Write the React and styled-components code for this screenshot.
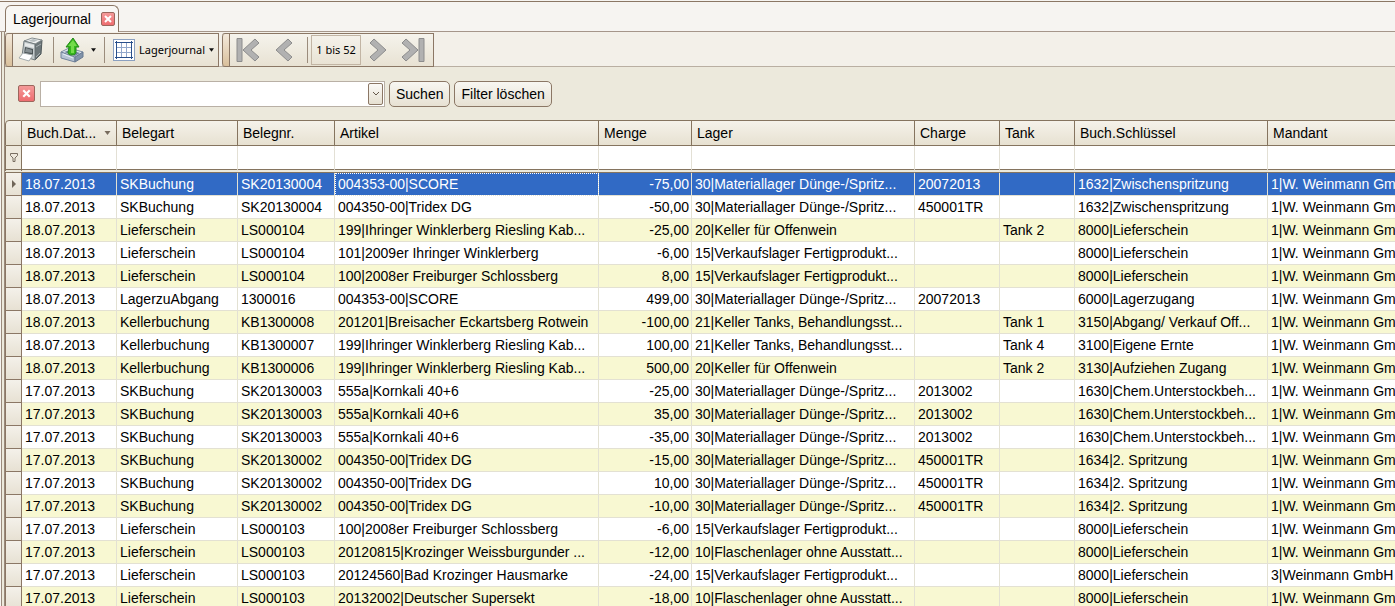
import React from "react";
import styled, { createGlobalStyle } from "styled-components";

const columns = [
  { title: "Buch.Dat...", width: 95, sorted: true },
  { title: "Belegart", width: 121 },
  { title: "Belegnr.", width: 97 },
  { title: "Artikel", width: 264 },
  { title: "Menge", width: 93, numeric: true },
  { title: "Lager", width: 223 },
  { title: "Charge", width: 85 },
  { title: "Tank", width: 75 },
  { title: "Buch.Schlüssel", width: 193 },
  { title: "Mandant" },
];

const weinmann = "1|W. Weinmann GmbH";
const material = "30|Materiallager Dünge-/Spritz...";
const verkauf = "15|Verkaufslager Fertigprodukt...";
const tanks = "21|Keller Tanks, Behandlungsst...";
const riesling = "199|Ihringer Winklerberg Riesling Kab...";

const rows = [
  ["18.07.2013", "SKBuchung", "SK20130004", "004353-00|SCORE", "-75,00", material, "20072013", "", "1632|Zwischenspritzung", weinmann],
  ["18.07.2013", "SKBuchung", "SK20130004", "004350-00|Tridex DG", "-50,00", material, "450001TR", "", "1632|Zwischenspritzung", weinmann],
  ["18.07.2013", "Lieferschein", "LS000104", riesling, "-25,00", "20|Keller für Offenwein", "", "Tank 2", "8000|Lieferschein", weinmann],
  ["18.07.2013", "Lieferschein", "LS000104", "101|2009er Ihringer Winklerberg", "-6,00", verkauf, "", "", "8000|Lieferschein", weinmann],
  ["18.07.2013", "Lieferschein", "LS000104", "100|2008er Freiburger Schlossberg", "8,00", verkauf, "", "", "8000|Lieferschein", weinmann],
  ["18.07.2013", "LagerzuAbgang", "1300016", "004353-00|SCORE", "499,00", material, "20072013", "", "6000|Lagerzugang", weinmann],
  ["18.07.2013", "Kellerbuchung", "KB1300008", "201201|Breisacher Eckartsberg Rotwein", "-100,00", tanks, "", "Tank 1", "3150|Abgang/ Verkauf Off...", weinmann],
  ["18.07.2013", "Kellerbuchung", "KB1300007", riesling, "100,00", tanks, "", "Tank 4", "3100|Eigene Ernte", weinmann],
  ["18.07.2013", "Kellerbuchung", "KB1300006", riesling, "500,00", "20|Keller für Offenwein", "", "Tank 2", "3130|Aufziehen Zugang", weinmann],
  ["17.07.2013", "SKBuchung", "SK20130003", "555a|Kornkali 40+6", "-25,00", material, "2013002", "", "1630|Chem.Unterstockbeh...", weinmann],
  ["17.07.2013", "SKBuchung", "SK20130003", "555a|Kornkali 40+6", "35,00", material, "2013002", "", "1630|Chem.Unterstockbeh...", weinmann],
  ["17.07.2013", "SKBuchung", "SK20130003", "555a|Kornkali 40+6", "-35,00", material, "2013002", "", "1630|Chem.Unterstockbeh...", weinmann],
  ["17.07.2013", "SKBuchung", "SK20130002", "004350-00|Tridex DG", "-15,00", material, "450001TR", "", "1634|2. Spritzung", weinmann],
  ["17.07.2013", "SKBuchung", "SK20130002", "004350-00|Tridex DG", "10,00", material, "450001TR", "", "1634|2. Spritzung", weinmann],
  ["17.07.2013", "SKBuchung", "SK20130002", "004350-00|Tridex DG", "-10,00", material, "450001TR", "", "1634|2. Spritzung", weinmann],
  ["17.07.2013", "Lieferschein", "LS000103", "100|2008er Freiburger Schlossberg", "-6,00", verkauf, "", "", "8000|Lieferschein", weinmann],
  ["17.07.2013", "Lieferschein", "LS000103", "20120815|Krozinger Weissburgunder ...", "-12,00", "10|Flaschenlager ohne Ausstatt...", "", "", "8000|Lieferschein", weinmann],
  ["17.07.2013", "Lieferschein", "LS000103", "20124560|Bad Krozinger Hausmarke", "-24,00", verkauf, "", "", "8000|Lieferschein", "3|Weinmann GmbH"],
  ["17.07.2013", "Lieferschein", "LS000103", "20132002|Deutscher Supersekt", "-18,00", "10|Flaschenlager ohne Ausstatt...", "", "", "8000|Lieferschein", weinmann],
];

const PrinterIcon = () => (
  <svg width="26" height="26" viewBox="0 0 26 26" aria-hidden="true">
    <path d="m17 7 7-4-1 14-6 6z" fill="#6d777a" stroke="#50595c" strokeLinejoin="round" />
    <path d="m6 4 8-3 10 2-7 4z" fill="#eef0f0" stroke="#858d8f" strokeLinejoin="round" />
    <path d="m10 4 5-2 5 1-4 2z" fill="#b9c0c2" />
    <path d="m6 4 11 3v16L4 19z" fill="#c3cacc" stroke="#737c7f" strokeLinejoin="round" />
    <path d="m7 6 9 2v3L7 9z" fill="#e7eaea" />
    <path d="m7 10 8 2v7l-9-2z" fill="#4b5356" />
    <path d="m8 11 6 2v3l-7-1z" fill="#879093" />
    <path d="m5 16 10 2-4 6-10-3z" fill="#fff" stroke="#a3abad" strokeLinejoin="round" />
    <path d="m18 10 5-3M18 20l4-4" stroke="#a5adaf" />
  </svg>
);

const ExportIcon = () => (
  <svg width="24" height="26" viewBox="0 0 24 26" aria-hidden="true">
    <path d="m1 15 8-4 14 4-8 6z" fill="#dfe6ee" stroke="#7b8ca2" strokeLinejoin="round" />
    <path d="m4 15 6-2 10 3-5 3z" fill="#71849c" />
    <path d="m1 15 14 5v5L1 21z" fill="#b7c4d4" stroke="#72839b" strokeLinejoin="round" />
    <path d="m15 20 8-5v5l-8 5z" fill="#8193aa" stroke="#677991" strokeLinejoin="round" />
    <path d="m3 17 10 4" stroke="#eaf0f7" />
    <path d="M9 10H6l7-9 6 9h-3v5c0 2-2 3-4 3s-4-1-4-2z" fill="#35b71c" stroke="#238918" strokeLinejoin="round" />
    <path d="m8 9 5-6 4 6h-3v7h-3V9z" fill="#73dc4a" />
  </svg>
);

const GridIcon = () => (
  <svg width="22" height="22" viewBox="0 0 22 22" aria-hidden="true" shapeRendering="crispEdges">
    <rect x="0.5" y="0.5" width="21" height="21" fill="#fff" stroke="#8ba0c0" />
    <path d="M8.5 3v16M13.5 3v16M3 8.5h16M3 13.5h16" stroke="#91a7cb" />
    <path d="M3.5 2v18M18.5 2v18M2 3.5h18M2 18.5h18" stroke="#294f8b" />
  </svg>
);

const NavIcon = ({ forward, end }) => (
  <svg width={end ? 24 : 17} height="24" viewBox={end ? "0 0 24 24" : "7 0 17 24"} aria-hidden="true">
    <g transform={forward ? (end ? "matrix(-1 0 0 1 24 0)" : "matrix(-1 0 0 1 31 0)") : undefined} fill="#b1b1b1" stroke="#8c8c8c">
      {end && <path d="M1 .5h5v23H1z" />}
      <path d="m19 1 4 4-8 7 8 7-4 4L7 12z" />
    </g>
  </svg>
);

const CloseIcon = ({ size }) => (
  <svg width={size} height={size} viewBox="0 0 12 12" aria-hidden="true">
    <path d="m3 3 6 6M9 3 3 9" stroke="#fff" strokeWidth="2" />
  </svg>
);

const Arrow = ({ color = "#111", size = 5 }) => (
  <svg width={size} height="4" viewBox="0 0 6 4" aria-hidden="true">
    <path d="M0 0h6L3 4z" fill={color} />
  </svg>
);

const App = () => {
  return (
    <>
      <GlobalStyle />
      <Page>
        <TabStrip role="tablist">
          <Tab role="tab" aria-selected="true" tabIndex={0}>
            Lagerjournal
            <CloseButton $size={14} aria-label="Tab schließen">
              <CloseIcon size={12} />
            </CloseButton>
          </Tab>
        </TabStrip>
        <Panel>
          <ToolbarRow>
            <Toolbar>
              <Grip />
              <ToolButton $width={35} aria-label="Drucken">
                <PrinterIcon />
              </ToolButton>
              <Separator />
              <ToolButton $width={42} aria-label="Exportieren">
                <ExportIcon />
                <Arrow />
              </ToolButton>
              <Separator />
              <LayoutButton>
                <GridIcon />
                <span>Lagerjournal</span>
                <Arrow />
              </LayoutButton>
            </Toolbar>
            <Toolbar>
              <Grip />
              <ToolButton $width={36} aria-label="Erster Datensatz">
                <NavIcon end />
              </ToolButton>
              <ToolButton $width={36} aria-label="Zurück">
                <NavIcon />
              </ToolButton>
              <Separator />
              <PageBox>1 bis 52</PageBox>
              <ToolButton $width={32} aria-label="Weiter">
                <NavIcon forward />
              </ToolButton>
              <ToolButton $width={40} aria-label="Letzter Datensatz">
                <NavIcon forward end />
              </ToolButton>
            </Toolbar>
          </ToolbarRow>
          <SearchBar>
            <CloseButton $size={17} aria-label="Suche schließen">
              <CloseIcon size={13} />
            </CloseButton>
            <SearchBox>
              <input type="text" aria-label="Suchbegriff" />
              <button aria-label="Suchverlauf">
                <svg width="8" height="5" viewBox="0 0 8 5" aria-hidden="true">
                  <path d="m1 1 3 3 3-3" fill="none" stroke="#65594b" />
                </svg>
              </button>
            </SearchBox>
            <TextButton>Suchen</TextButton>
            <TextButton>Filter löschen</TextButton>
          </SearchBar>
          <Table>
            <colgroup>
              <Col $width={17} />
              {columns.map((column) => (
                <Col key={column.title} $width={column.width} />
              ))}
            </colgroup>
            <thead>
              <tr>
                <HeadCell $first />
                {columns.map((column) => (
                  <HeadCell key={column.title} scope="col">
                    <HeadLabel>
                      {column.title}
                      {column.sorted && <Arrow color="#776b5d" size={7} />}
                    </HeadLabel>
                  </HeadCell>
                ))}
              </tr>
              <tr>
                <FilterCell $marker>
                  <svg width="8" height="9" viewBox="0 0 8 9" aria-hidden="true">
                    <path d="M.5.5h7v2L5 5v3.5H3V5L.5 2.5z" fill="#eee8dc" stroke="#796e61" />
                  </svg>
                </FilterCell>
                {columns.map((column) => (
                  <FilterCell key={column.title}>
                    <input type="text" aria-label={`Filter ${column.title}`} />
                  </FilterCell>
                ))}
              </tr>
            </thead>
            <tbody>
              {rows.map((row, index) => (
                <Row key={index} $selected={index === 0} $tinted={index > 0 && index % 2 === 0}>
                  <RowMarker>
                    {index === 0 && (
                      <svg width="4" height="8" viewBox="0 0 4 8" aria-hidden="true">
                        <path d="m0 0 4 4-4 4z" fill="#6f6558" />
                      </svg>
                    )}
                  </RowMarker>
                  {row.map((value, i) => (
                    <Cell key={i} $numeric={columns[i].numeric} $focused={index === 0 && i === 3}>
                      {value}
                    </Cell>
                  ))}
                </Row>
              ))}
            </tbody>
          </Table>
        </Panel>
      </Page>
    </>
  );
};

export default App;

const GlobalStyle = createGlobalStyle`
  * {
    box-sizing: border-box;
  }
  body {
    margin: 0;
    background: #ece9dc;
    color: #000;
    font: 14px/20px "Liberation Sans", Arial, sans-serif;
  }
  button, input {
    font: inherit;
    color: inherit;
    margin: 0;
    padding: 0;
  }
`;

const Page = styled.div`
  height: 100vh;
  overflow: hidden;
  display: flex;
  flex-direction: column;
  padding-top: 1px;
  background: #f6f4f1;
`;

const TabStrip = styled.div`
  flex: none;
  height: 31px;
  display: flex;
  align-items: flex-end;
  padding-left: 5px;
  border-top: 1px solid #8b7765;
  border-bottom: 1px solid #a5968a;
`;

const Tab = styled.div`
  height: 27px;
  margin-bottom: -1px;
  display: flex;
  align-items: center;
  gap: 10px;
  padding: 0 3px 0 7px;
  border: 1px solid #8b7765;
  border-bottom: 0;
  border-radius: 6px 6px 0 0;
  background: #f8f7f4;
`;

const CloseButton = styled.button`
  flex: none;
  width: ${({ $size }) => $size}px;
  height: ${({ $size }) => $size}px;
  display: flex;
  align-items: center;
  justify-content: center;
  border: 1px solid #9c665c;
  border-radius: 2px;
  background: linear-gradient(#f49a99, #ee6d70);
`;

const Panel = styled.main`
  flex: 1;
  min-height: 0;
  overflow: hidden;
  margin-left: 1px;
  border-left: 4px double #9a8a7c;
  background: #ece9dc;
`;

const ToolbarRow = styled.div`
  height: 35px;
  display: flex;
  gap: 3px;
  padding-top: 1px;
  border-bottom: 1px solid #b9afa2;
  background: #f3f0e9;
`;

const Toolbar = styled.div`
  height: 34px;
  display: flex;
  align-items: center;
  border: 1px solid #8b7765;
  border-left: 0;
  border-radius: 3px 0 0 3px;
  background: linear-gradient(#f5f3ec, #e8e2d3);
`;

const Grip = styled.span`
  align-self: stretch;
  width: 8px;
  border: solid #8b7765;
  border-width: 0 1px;
  border-radius: 3px 0 0 3px;
  background: linear-gradient(#f3e9db, #d9c09c);
`;

const ToolButton = styled.button`
  width: ${({ $width }) => $width}px;
  height: 30px;
  display: flex;
  align-items: center;
  justify-content: center;
  gap: 7px;
  border: 0;
  background: none;
`;

const LayoutButton = styled(ToolButton)`
  width: auto;
  gap: 4px;
  padding: 0 4px 0 5px;
  font: 11px/20px "Noto Sans", "Open Sans", sans-serif;
`;

const Separator = styled.span`
  width: 1px;
  height: 26px;
  margin: 0 3px 0 5px;
  background: #9b8c7c;
`;

const PageBox = styled.output`
  width: 50px;
  height: 30px;
  border: 1px solid #c2b5a4;
  font: 11px/28px "Noto Sans", "Open Sans", sans-serif;
  text-align: center;
  white-space: nowrap;
`;

const SearchBar = styled.div`
  height: 53px;
  display: flex;
  align-items: center;
  gap: 4px;
  padding-left: 13px;
`;

const SearchBox = styled.div`
  width: 345px;
  height: 26px;
  margin-left: 1px;
  display: flex;
  border: 1px solid #b9b0a5;
  background: #fff;

  input {
    flex: 1;
    min-width: 0;
    padding: 0 4px;
    border: 0;
    outline: 0;
    background: none;
  }
  button {
    width: 15px;
    margin: 1px;
    display: flex;
    align-items: center;
    justify-content: center;
    border: 1px solid #8b7765;
    border-radius: 2px;
    background: linear-gradient(#fbfaf7, #e6e0d1);
  }
`;

const TextButton = styled.button`
  height: 26px;
  padding: 0 6px;
  border: 1px solid #8b7765;
  border-radius: 5px;
  background: linear-gradient(#f8f7f2, #e7e1d3);
  white-space: nowrap;
`;

const Table = styled.table`
  width: 100%;
  table-layout: fixed;
  border-collapse: separate;
  border-spacing: 0;

  th:last-child,
  td:last-child {
    border-right: 0;
  }
`;

const Col = styled.col`
  width: ${({ $width }) => ($width ? `${$width}px` : "auto")};
`;

const HeadCell = styled.th`
  height: 26px;
  padding: 0 5px;
  border: solid #85745f;
  border-width: 1px 1px 1px ${({ $first }) => ($first ? "1px" : "0")};
  border-top-left-radius: ${({ $first }) => ($first ? "4px" : "0")};
  background: linear-gradient(#f5f2ea, #e7e1d1);
  font-weight: normal;
  text-align: left;
`;

const HeadLabel = styled.span`
  display: flex;
  align-items: center;
  justify-content: space-between;
  white-space: nowrap;
`;

const FilterCell = styled.td`
  height: 27px;
  padding: 0;
  border-right: 1px solid ${({ $marker }) => ($marker ? "#85745f" : "#e3e0d5")};
  border-left: ${({ $marker }) => ($marker ? "1px solid #85745f" : "0")};
  border-bottom: 4px double #85745f;
  background: ${({ $marker }) => ($marker ? "#eee9dd" : "#fff")};
  background-clip: padding-box;
  text-align: center;
  line-height: 0;

  input {
    display: block;
    width: 100%;
    height: 22px;
    padding: 0 3px;
    border: 0;
    outline: 0;
    background: none;
  }
`;

const RowMarker = styled.td`
  padding: 0;
  border: solid #8b7765;
  border-width: 0 1px 1px;
  background: linear-gradient(#f4f1ea, #e7e1d3);
  text-align: center;
  line-height: 0;
`;

const Cell = styled.td`
  height: 23px;
  padding: 0 2px 0 3px;
  border: solid #e3e1d3;
  border-width: 0 1px 1px 0;
  overflow: hidden;
  line-height: 22px;
  white-space: nowrap;
  text-align: ${({ $numeric }) => ($numeric ? "right" : "left")};
  outline: ${({ $focused }) => ($focused ? "1px dotted #fff" : "none")};
  outline-offset: -1px;
`;

const Row = styled.tr`
  background: ${({ $selected, $tinted }) => ($selected ? "#316ac5" : $tinted ? "#f8f8d2" : "#fff")};
  color: ${({ $selected }) => ($selected ? "#fff" : "#000")};
`;
